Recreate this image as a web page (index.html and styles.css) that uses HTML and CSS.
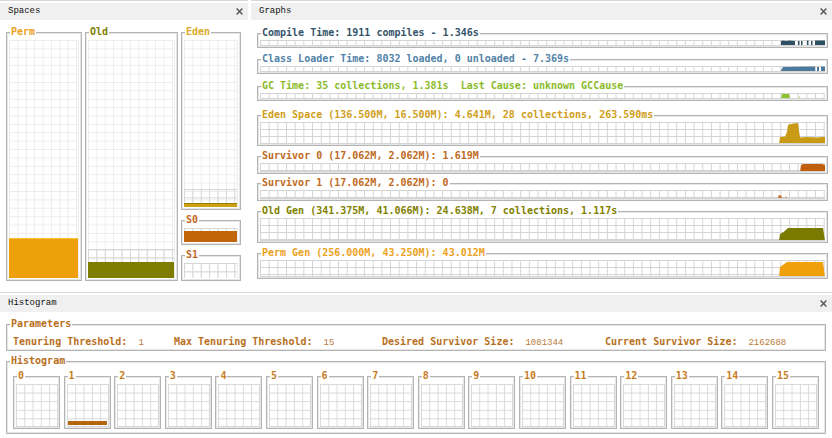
FILE: index.html
```html
<!DOCTYPE html>
<html>
<head>
<meta charset="utf-8">
<link rel="stylesheet" href="styles.css">
</head>
<body>
<div class="top">
  <section class="panel spaces">
    <div class="phead"><span>Spaces</span><svg class="xic" width="7" height="7" viewBox="0 0 7 7"><path d="M0.6 0.6L6.4 6.4M6.4 0.6L0.6 6.4" stroke="#555" stroke-width="1.4"/></svg></div>
    <div class="sbody">
      <div class="tb sbox perm">
        <div class="tt c-perm">Perm</div>
        <div class="sgrid"><div class="commit" style="height:40px"><div class="fill f-perm" style="height:40px"></div></div></div>
      </div>
      <div class="tb sbox old">
        <div class="tt c-old">Old</div>
        <div class="sgrid"><div class="commit" style="height:29px"><div class="fill f-old" style="height:16px"></div></div></div>
      </div>
      <div class="scol">
        <div class="tb sbox eden">
          <div class="tt c-eden">Eden</div>
          <div class="sgrid"><div class="commit" style="height:18px"><div class="fill f-eden" style="height:4px"></div></div></div>
        </div>
        <div class="tb sbox s0">
          <div class="tt c-surv">S0</div>
          <div class="sgrid"><div class="commit" style="height:14px"><div class="fill f-surv" style="height:11px"></div></div></div>
        </div>
        <div class="tb sbox s1">
          <div class="tt c-surv">S1</div>
          <div class="sgrid"><div class="commit" style="height:15px"></div></div>
        </div>
      </div>
    </div>
  </section>
  <section class="panel graphs">
    <div class="phead"><span>Graphs</span><svg class="xic" width="7" height="7" viewBox="0 0 7 7"><path d="M0.6 0.6L6.4 6.4M6.4 0.6L0.6 6.4" stroke="#555" stroke-width="1.4"/></svg></div>
    <div class="gbody">
      <div class="tb gb h15">
        <div class="tt c-compile">Compile Time: 1911 compiles - 1.346s</div>
        <div class="strip"><svg width="565" height="6" viewBox="0 0 565 6"><path fill="#2e5063" d="M521,6 L521,1 L523,0.5 L526,1 L529,0.5 L535,1 L535,6 Z M538,6 V1 H539.5 V6 Z M541,6 V1 H542.5 V6 Z M547,6 V0.5 H548.5 V6 Z M551,6 V1 H552.5 V6 Z M555,6 V0.5 H565 V6 Z"/></svg></div>
      </div>
      <div class="tb gb h15 m11">
        <div class="tt c-class">Class Loader Time: 8032 loaded, 0 unloaded - 7.369s</div>
        <div class="strip"><svg width="565" height="6" viewBox="0 0 565 6"><path fill="#4b7a9c" d="M520,6 L523,1 L555,0.5 L555,6 Z M557,6 V1 H559 V6 Z M561,6 V0.5 H565 V6 Z"/></svg></div>
      </div>
      <div class="tb gb h15 m12">
        <div class="tt c-gc">GC Time: 35 collections, 1.381s  Last Cause: unknown GCCause</div>
        <div class="strip"><svg width="565" height="6" viewBox="0 0 565 6"><path fill="#8cc22c" d="M521,6 L522,1 L529,1 L530,6 Z M538.5,6 L539.2,3 L540,6 Z"/></svg></div>
      </div>
      <div class="tb gb h31 m14">
        <div class="tt c-eden2">Eden Space (136.500M, 16.500M): 4.641M, 28 collections, 263.590ms</div>
        <div class="strip tall"><svg width="565" height="22" viewBox="0 0 565 22"><path fill="#c89a16" d="M519,22 L520,15 L525,14.5 L527,10 L528,3 L533,1.5 L538,1 L540,15.5 L547,15 L557,15.5 L565,14.8 L565,22 Z"/></svg></div>
      </div>
      <div class="tb gb h18 m10">
        <div class="tt c-surv2">Survivor 0 (17.062M, 2.062M): 1.619M</div>
        <div class="strip mid"><svg width="565" height="9" viewBox="0 0 565 9"><path fill="#c0600f" d="M540,9 L541,2 L543,1 L562,1 L565,2 L565,9 Z"/></svg></div>
      </div>
      <div class="tb gb h18 m9">
        <div class="tt c-surv2">Survivor 1 (17.062M, 2.062M): 0</div>
        <div class="strip mid"><svg width="565" height="9" viewBox="0 0 565 9"><path fill="#c27434" d="M518,9 L518.5,5 L521,5.5 L523,9 Z M525,9 L526,6 L527,9 Z"/></svg></div>
      </div>
      <div class="tb gb h32 m10">
        <div class="tt c-old">Old Gen (341.375M, 41.066M): 24.638M, 7 collections, 1.117s</div>
        <div class="strip tall"><svg width="565" height="23" viewBox="0 0 565 23"><path fill="#7b7a00" d="M519,23 L520,16 L523,14.5 L528,10 L563,10 L565,23 Z"/></svg></div>
      </div>
      <div class="tb gb h26 m10">
        <div class="tt c-perm">Perm Gen (256.000M, 43.250M): 43.012M</div>
        <div class="strip tall"><svg width="565" height="17" viewBox="0 0 565 17"><path fill="#efa00a" d="M519,17 L520,7 L527,2 L563,2 L565,17 Z"/></svg></div>
      </div>
    </div>
  </section>
</div>
<section class="panel hist">
  <div class="phead"><span>Histogram</span><svg class="xic" width="7" height="7" viewBox="0 0 7 7"><path d="M0.6 0.6L6.4 6.4M6.4 0.6L0.6 6.4" stroke="#555" stroke-width="1.4"/></svg></div>
  <div class="hbody">
    <div class="tb params">
      <div class="tt c-hist">Parameters</div>
      <div class="prow">
        <span class="pg"><b class="pl">Tenuring Threshold:</b><span class="pv">1</span></span>
        <span class="pg"><b class="pl">Max Tenuring Threshold:</b><span class="pv">15</span></span>
        <span class="pg"><b class="pl">Desired Survivor Size:</b><span class="pv">1081344</span></span>
        <span class="pg"><b class="pl">Current Survivor Size:</b><span class="pv">2162688</span></span>
      </div>
    </div>
    <div class="tb histbox">
      <div class="tt c-hist">Histogram</div>
      <div class="hrow">
        <div class="tb hb"><div class="tt c-hd">0</div><div class="hgrid"></div></div>
        <div class="tb hb"><div class="tt c-hd">1</div><div class="hgrid"><div class="hfill"></div></div></div>
        <div class="tb hb"><div class="tt c-hd">2</div><div class="hgrid"></div></div>
        <div class="tb hb"><div class="tt c-hd">3</div><div class="hgrid"></div></div>
        <div class="tb hb"><div class="tt c-hd">4</div><div class="hgrid"></div></div>
        <div class="tb hb"><div class="tt c-hd">5</div><div class="hgrid"></div></div>
        <div class="tb hb"><div class="tt c-hd">6</div><div class="hgrid"></div></div>
        <div class="tb hb"><div class="tt c-hd">7</div><div class="hgrid"></div></div>
        <div class="tb hb"><div class="tt c-hd">8</div><div class="hgrid"></div></div>
        <div class="tb hb"><div class="tt c-hd">9</div><div class="hgrid"></div></div>
        <div class="tb hb"><div class="tt c-hd">10</div><div class="hgrid"></div></div>
        <div class="tb hb"><div class="tt c-hd">11</div><div class="hgrid"></div></div>
        <div class="tb hb"><div class="tt c-hd">12</div><div class="hgrid"></div></div>
        <div class="tb hb"><div class="tt c-hd">13</div><div class="hgrid"></div></div>
        <div class="tb hb"><div class="tt c-hd">14</div><div class="hgrid"></div></div>
        <div class="tb hb"><div class="tt c-hd">15</div><div class="hgrid"></div></div>
      </div>
    </div>
  </div>
</section>
</body>
</html>
```

FILE: styles.css
```css
* { box-sizing: border-box; margin: 0; padding: 0; }
html, body { width: 832px; height: 438px; overflow: hidden; background: #fff; }
body { font-family: "Liberation Mono", "DejaVu Sans Mono", monospace; color: #1a1a1a; }

.top { display: flex; gap: 3px; height: 292px; }
.panel { border-top: 1px solid #d6d6d6; display: flex; flex-direction: column; }
.spaces { width: 248px; }
.graphs { flex: 1; }
.hist { height: 146px; }

.phead {
  margin-top: 2px; height: 17px; background: #f0f0f0;
  display: flex; align-items: center; justify-content: space-between;
  padding: 0 5px 0 8px; font-size: 9px; line-height: 17px; color: #111;
}
.xic { display: block; }

/* titled (etched) border */
.tb {
  border: 1px solid #b4b4b4;
  box-shadow: inset 0 0 0 1px #e6e6e6;
  display: flex; flex-direction: column;
}
.tt {
  align-self: flex-start; margin: -6px 0 0 1px; padding: 0 1px;
  background: #fff;
  font-family: "DejaVu Sans Mono", "Liberation Mono", monospace;
  font-weight: bold; font-size: 10px; line-height: 10px;
  white-space: pre;
}

/* colours */
.c-perm { color: #eba21c; }
.c-old { color: #7f7f00; }
.c-eden { color: #d9aa2c; }
.c-surv { color: #c2661c; }
.c-compile { color: #34546c; }
.c-class { color: #5283a8; }
.c-gc { color: #8cbb2a; }
.c-eden2 { color: #d09e1c; }
.c-surv2 { color: #bf6a22; }
.c-hist { color: #b8701e; }
.c-hd { color: #c87c1e; }

/* Spaces */
.sbody { display: flex; gap: 3px; padding: 12px 0 0 6px; }
.sbox { padding: 0 2px 2px 2px; }
.perm { width: 76px; height: 249px; }
.old { width: 93px; height: 249px; }
.scol { width: 60px; height: 249px; display: flex; flex-direction: column; gap: 10px; }
.eden { height: 178px; }
.s0 { height: 25px; }
.s1 { height: 26px; }
.sgrid {
  flex: 1; margin-top: 3px;
  display: flex; flex-direction: column; justify-content: flex-end;
  background-image: linear-gradient(90deg, #ececec 1px, transparent 1px), linear-gradient(#ececec 1px, transparent 1px);
  background-size: 8.4px 8.4px;
  border-right: 1px solid #ececec;
}
.commit {
  display: flex; flex-direction: column; justify-content: flex-end;
  background-image: linear-gradient(90deg, #d6d6d6 1px, transparent 1px), linear-gradient(#d6d6d6 1px, transparent 1px);
  background-size: 8.4px 8.4px;
}
.fill { width: 100%; }
.f-perm { background: #ed9f0c; border-top: 1px solid #f6c030; }
.f-old { background: #7f7d00; }
.f-eden { background: #cba214; border-top: 1px solid #9c7c08; }
.f-surv { background: #c0650a; }

/* Graphs */
.gbody { display: flex; flex-direction: column; padding: 13px 4px 0 6px; }
.gb { padding: 0 2px 1px 2px; }
.h15 { height: 15px; }
.h18 { height: 18px; }
.h26 { height: 26px; }
.h31 { height: 31px; }
.h32 { height: 32px; }
.m9 { margin-top: 9px; }
.m10 { margin-top: 10px; }
.m11 { margin-top: 11px; }
.m12 { margin-top: 12px; }
.m14 { margin-top: 14px; }
.strip {
  flex: 1; margin-top: 2px; overflow: hidden;
  background-image: linear-gradient(90deg, #d4d4d4 1px, transparent 1px), linear-gradient(#d4d4d4 1px, transparent 1px);
  background-size: 8.68px 7px;
  border-bottom: 1px solid #d4d4d4;
}
.strip svg { display: block; }

/* Histogram */
.hbody { display: flex; flex-direction: column; padding: 12px 6px 0 6px; }
.params { height: 27px; padding: 0 2px 1px 2px; }
.prow {
  margin-top: 7px; padding-left: 4px;
  display: grid; grid-template-columns: 161px 208px 223px auto;
  line-height: 12px; color: #b8701e;
}
.pg { display: flex; gap: 11px; align-items: baseline; white-space: pre; }
.pl { font-family: "DejaVu Sans Mono", "Liberation Mono", monospace; font-weight: bold; font-size: 10px; }
.pv { font-size: 9px; color: #bb7a3a; }
.histbox { height: 73px; margin-top: 10px; padding: 0 2px; }
.hrow { margin: 10px 4px 0 4px; display: flex; justify-content: space-between; }
.hb { width: 47px; height: 53px; padding: 0 1px 1px 2px; }
.hgrid {
  flex: 1; margin-top: 3px;
  display: flex; flex-direction: column; justify-content: flex-end;
  background-image: linear-gradient(90deg, #d8d8d8 1px, transparent 1px), linear-gradient(#d8d8d8 1px, transparent 1px);
  background-size: 8.3px 8.6px;
  border-right: 1px solid #d8d8d8; border-bottom: 1px solid #d8d8d8;
}
.hfill { height: 4px; margin: 0 1px 1px 1px; background: #b5650d; }
```
